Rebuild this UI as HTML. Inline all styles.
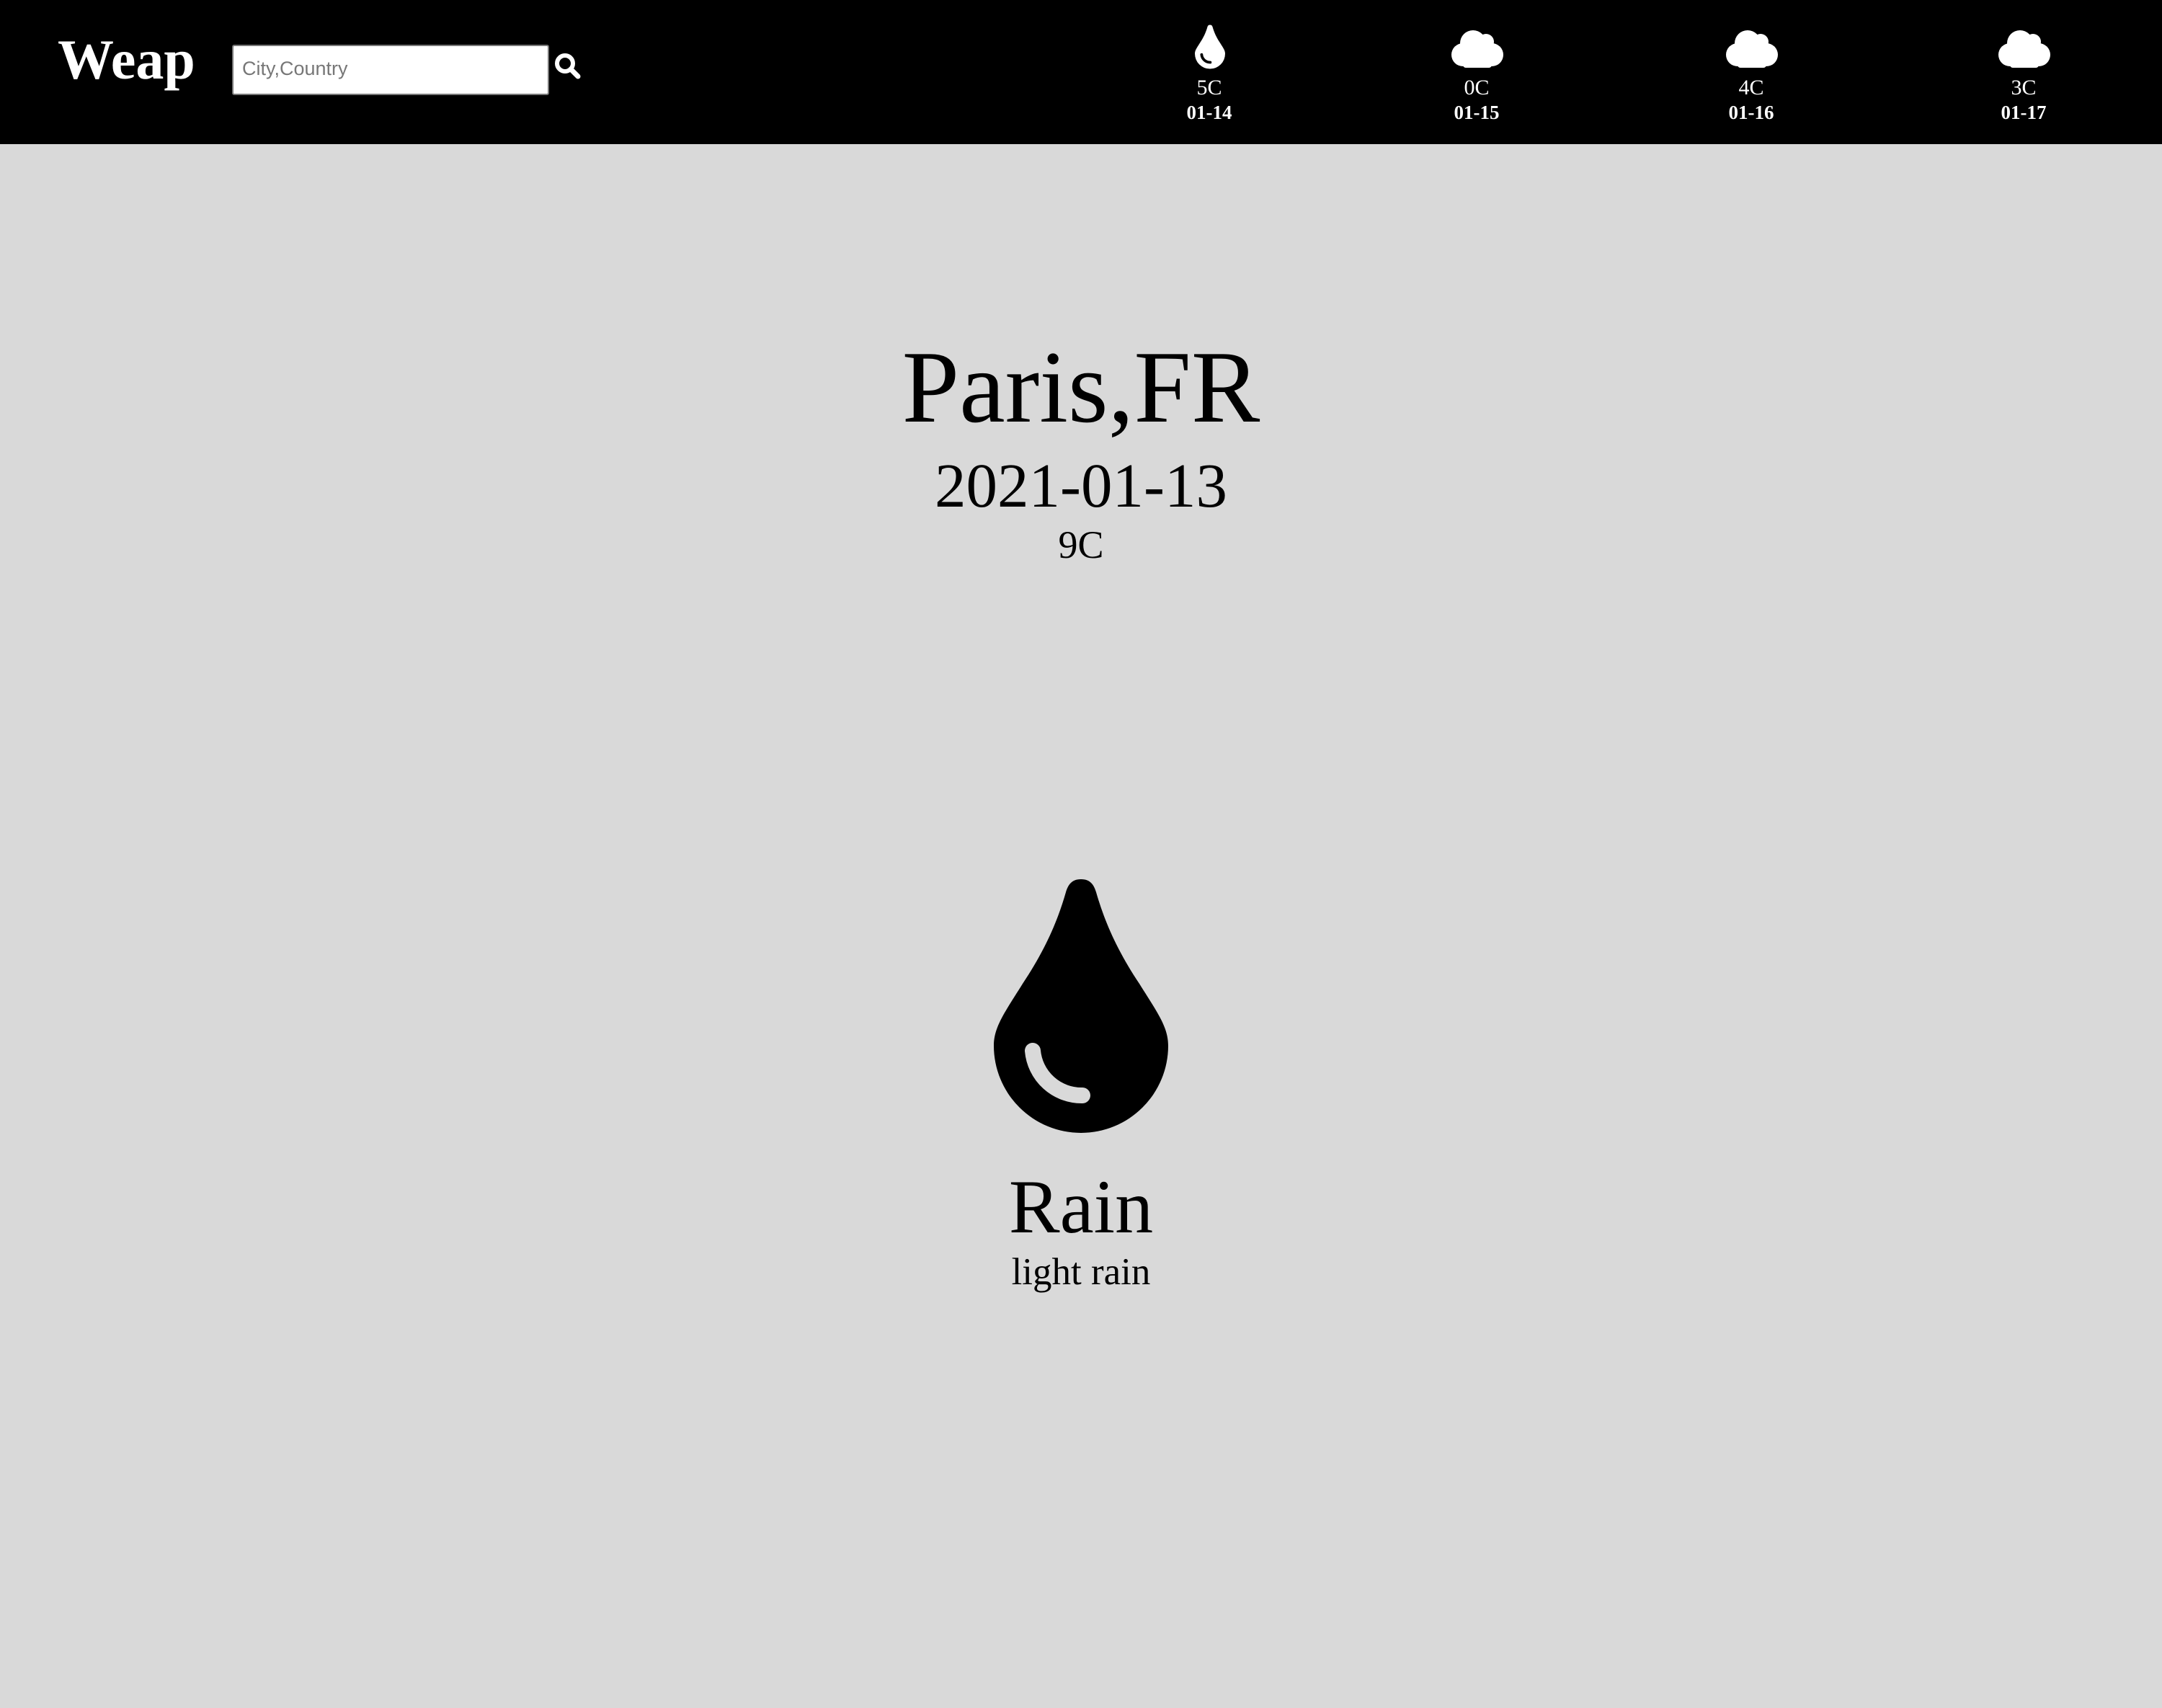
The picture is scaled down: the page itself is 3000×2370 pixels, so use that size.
<!DOCTYPE html>
<html><head><meta charset="utf-8"><style>
html,body{margin:0;padding:0;width:3000px;height:2370px;background:#d9d9d9;overflow:hidden;font-family:"Liberation Serif",serif;}
.hdr{position:absolute;left:0;top:0;width:3000px;height:200px;background:#000;}
.logo{position:absolute;left:80px;top:28px;color:#fff;font-weight:bold;font-size:78px;line-height:110px;}
.inp{position:absolute;left:322px;top:62px;width:440px;height:70px;background:#fff;border:2px solid #777;border-radius:3px;box-sizing:border-box;font-family:"Liberation Sans",sans-serif;font-size:27px;color:#777;padding:16px 0 0 12px;}
.fc{position:absolute;top:30px;width:200px;text-align:center;color:#fff;}
.fc .t{position:absolute;top:74px;left:0;width:200px;font-size:30px;line-height:36px;}
.fc .d{position:absolute;top:108px;left:0;width:200px;font-size:27px;font-weight:bold;line-height:36px;}
.c{position:absolute;left:0;width:3000px;text-align:center;color:#000;}
</style></head><body>
<div class="hdr">
<div class="logo">Weap</div>
<div class="inp">City,Country</div>
<svg style="position:absolute;left:768px;top:72px" width="40" height="40" viewBox="0 0 40 40"><circle cx="16" cy="16" r="11" fill="none" stroke="#fff" stroke-width="6"/><line x1="24" y1="24" x2="34" y2="34" stroke="#fff" stroke-width="7" stroke-linecap="round"/></svg>
<div class="fc" style="left:1578px"><svg style="position:absolute;left:80px;top:3px" width="42" height="64" viewBox="0 0 242 352"><path d="M121 0C108 0 103 8 100 18C88 60 70 100 40 145C15 185 0 205 0 231A121 121 0 0 0 242 231C242 205 227 185 202 145C172 100 154 60 142 18C139 8 134 0 121 0Z" fill="#fff"/><path d="M54 238A68 68 0 0 0 123 300" fill="none" stroke="#000" stroke-width="22" stroke-linecap="round"/></svg><div class="t">5C</div><div class="d">01-14</div></div>
<div class="fc" style="left:1949px"><svg style="position:absolute;left:65px;top:8px" width="72" height="58" viewBox="0 0 72 58"><g fill="#fff"><circle cx="30" cy="22" r="18"/><circle cx="48" cy="20" r="11"/><circle cx="56" cy="38" r="16"/><circle cx="16" cy="38" r="16"/><rect x="16" y="30" width="40" height="26" rx="4"/></g></svg><div class="t">0C</div><div class="d">01-15</div></div>
<div class="fc" style="left:2330px"><svg style="position:absolute;left:65px;top:8px" width="72" height="58" viewBox="0 0 72 58"><g fill="#fff"><circle cx="30" cy="22" r="18"/><circle cx="48" cy="20" r="11"/><circle cx="56" cy="38" r="16"/><circle cx="16" cy="38" r="16"/><rect x="16" y="30" width="40" height="26" rx="4"/></g></svg><div class="t">4C</div><div class="d">01-16</div></div>
<div class="fc" style="left:2708px"><svg style="position:absolute;left:65px;top:8px" width="72" height="58" viewBox="0 0 72 58"><g fill="#fff"><circle cx="30" cy="22" r="18"/><circle cx="48" cy="20" r="11"/><circle cx="56" cy="38" r="16"/><circle cx="16" cy="38" r="16"/><rect x="16" y="30" width="40" height="26" rx="4"/></g></svg><div class="t">3C</div><div class="d">01-17</div></div>
</div>
<div class="c" style="top:452px;font-size:143px;line-height:170px;">Paris,FR</div>
<div class="c" style="top:619px;font-size:87px;line-height:110px;">2021-01-13</div>
<div class="c" style="top:721px;font-size:54px;line-height:70px;">9C</div>
<svg style="position:absolute;left:1379px;top:1220px" width="242" height="352" viewBox="0 0 242 352"><path d="M121 0C108 0 103 8 100 18C88 60 70 100 40 145C15 185 0 205 0 231A121 121 0 0 0 242 231C242 205 227 185 202 145C172 100 154 60 142 18C139 8 134 0 121 0Z" fill="#000"/><path d="M54 238A68 68 0 0 0 123 300" fill="none" stroke="#d9d9d9" stroke-width="22" stroke-linecap="round"/></svg>
<div class="c" style="top:1610px;font-size:106px;line-height:130px;">Rain</div>
<div class="c" style="top:1730px;font-size:53px;line-height:70px;">light rain</div>
</body></html>
